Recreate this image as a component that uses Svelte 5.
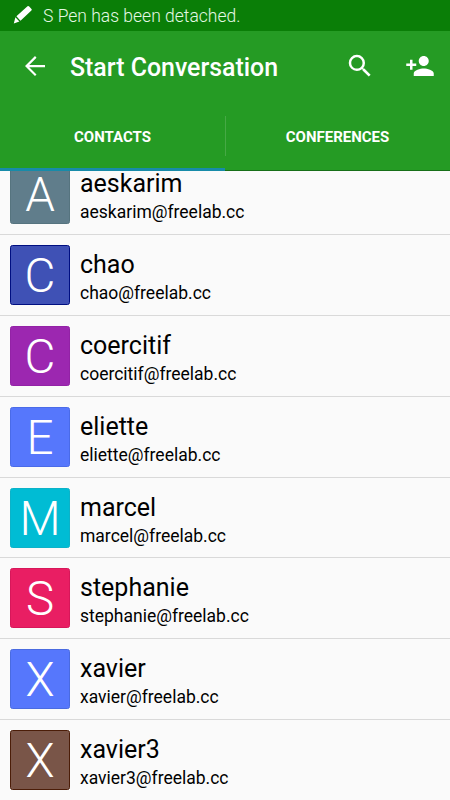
<script>
  const contacts = [
    { name: 'aeskarim', color: '#607d8b', edge: '#56747f' },
    { name: 'chao', color: '#3f51b5', edge: '#000f81' },
    { name: 'coercitif', color: '#9c27b0', edge: '#9322a6' },
    { name: 'eliette', color: '#5677fc', edge: '#4a6be8' },
    { name: 'marcel', color: '#00bcd4', edge: '#0cb2c8' },
    { name: 'stephanie', color: '#e91e63', edge: '#d7175a' },
    { name: 'xavier', color: '#5677fc', edge: '#4a6be0' },
    { name: 'xavier3', color: '#795548', edge: '#4b1d08' }
  ];
</script>

<div class="screen">
  <div class="status">
    <svg class="pen" width="20" height="20" viewBox="0 0 20 20" fill="#fff">
      <path d="M14.5 1.2Q15.4.5 16.2 1.4L18.5 4Q19.2 4.8 18.4 5.5L7.5 15.7 3.4 11.2ZM2.4 12.3L6.4 16.5.8 18.5Z" />
    </svg>
    <span>S Pen has been detached.</span>
  </div>
  <header>
    <svg class="back" width="30" height="30" viewBox="0 0 24 24" fill="#fff">
      <path d="M20 11.1H7.4l5.8-5.8L12 4 4 12l8 8 1.2-1.3-5.8-5.8H20z" />
    </svg>
    <h1>Start Conversation</h1>
    <svg class="search" width="30" height="30" viewBox="0 0 24 24" fill="#fff">
      <path d="M15.5 14h-.79l-.28-.27A6.471 6.471 0 0 0 16 9.5 6.5 6.5 0 1 0 9.5 16c1.61 0 3.09-.59 4.23-1.57l.27.28v.79l5 4.99L20.49 19l-4.99-5zm-6 0C7.01 14 5 11.99 5 9.5S7.01 5 9.5 5 14 7.01 14 9.5 11.99 14 9.5 14z" />
    </svg>
    <svg class="add" width="30" height="30" viewBox="0 0 24 24" fill="#fff">
      <path d="M15 12c2.21 0 4-1.79 4-4s-1.79-4-4-4-4 1.79-4 4 1.79 4 4 4zm-9-2V7H4v3H1v2h3v3h2v-3h3v-2H6zm9 4c-2.67 0-8 1.34-8 4v2h16v-2c0-2.66-5.33-4-8-4z" />
    </svg>
  </header>
  <nav>
    <div class="tab active">CONTACTS</div>
    <i></i>
    <div class="tab">CONFERENCES</div>
  </nav>
  <main>
    <ul>
      {#each contacts as c}
        <li>
          <div class="avatar" style="background:{c.color};border-color:{c.edge}">{c.name[0].toUpperCase()}</div>
          <div class="info">
            <div class="name">{c.name}</div>
            <div class="jid">{c.name}@freelab.cc</div>
          </div>
        </li>
      {/each}
    </ul>
  </main>
</div>

<style>
  .screen {
    width: 450px;
    height: 800px;
    overflow: hidden;
    display: flex;
    flex-direction: column;
    background: #fafafa;
    font-family: Roboto, sans-serif;
    color: #000;
  }
  .status {
    flex: none;
    height: 31px;
    box-sizing: border-box;
    display: flex;
    align-items: center;
    gap: 10px;
    padding-left: 13px;
    background: #0a7e07;
    color: #e4f8e4;
    font-size: 17.5px;
    font-weight: 300;
    white-space: nowrap;
  }
  header {
    flex: none;
    height: 71px;
    box-sizing: border-box;
    display: flex;
    align-items: center;
    padding: 0 15px 0 20px;
    background: #259b24;
  }
  svg { flex: none; }
  .pen { margin-top: -1px; }
  .back { margin-top: -1px; }
  .search, .add { margin-top: -1px; }
  h1 {
    flex: 1;
    margin: 2px 0 0 20px;
    color: #fff;
    font-size: 24.9px;
    font-weight: 500;
    line-height: 30px;
    white-space: nowrap;
  }
  .search { margin-right: 30px; }
  nav {
    flex: none;
    height: 69px;
    display: flex;
    background: #259b24;
    box-sizing: border-box;
    border-bottom: 1px solid #176f18;
  }
  .tab {
    flex: 1;
    height: 69px;
    box-sizing: border-box;
    text-align: center;
    color: #fff;
    font-size: 15px;
    font-weight: 700;
    line-height: 70px;
  }
  .active { border-bottom: 3px solid #178ba9; }
  nav i {
    width: 1px;
    height: 40px;
    margin: 14px -1px 0 0;
    background: #46a945;
  }
  main {
    flex: 1;
    min-height: 0;
    overflow: hidden;
  }
  ul {
    list-style: none;
    margin: -16.75px 0 0;
    padding: 0;
  }
  li {
    height: 80.85px;
    box-sizing: border-box;
    display: flex;
    gap: 10px;
    padding: 10px 10px 0;
    border-bottom: 1px solid #d9d9d9;
  }
  .avatar {
    flex: none;
    width: 60px;
    height: 60px;
    box-sizing: border-box;
    border: 1px solid;
    border-radius: 2.5px;
    color: #fff;
    font-size: 47.5px;
    font-weight: 300;
    line-height: 60px;
    text-align: center;
  }
  .info { padding-top: 5px; }
  .name {
    font-size: 25px;
    line-height: 29px;
  }
  .jid {
    margin-top: 4px;
    font-size: 17.5px;
    line-height: 21px;
  }
</style>
